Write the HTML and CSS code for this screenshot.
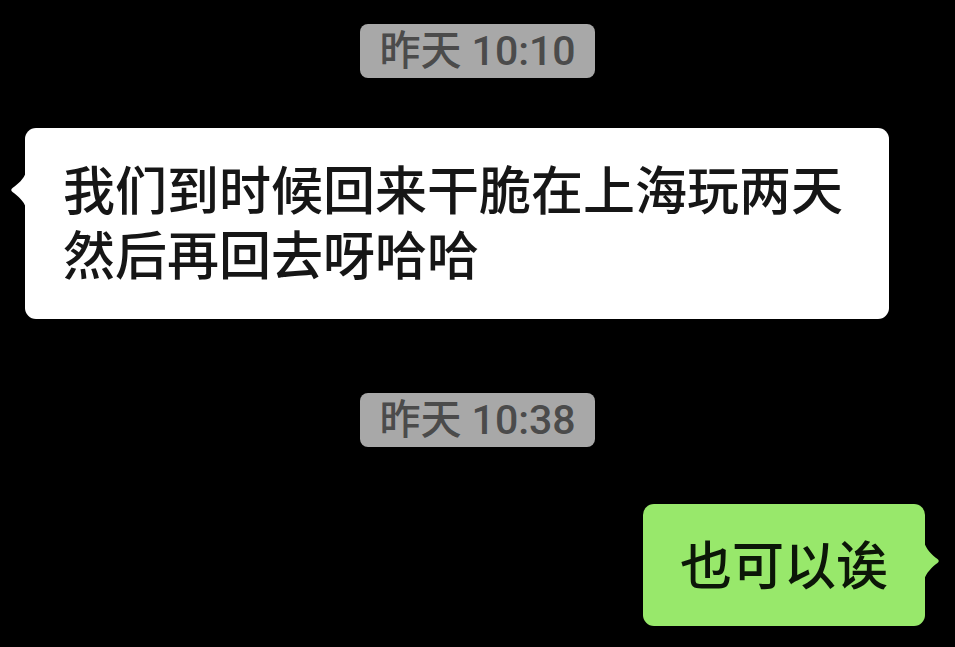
FILE: index.html
```html
<!DOCTYPE html>
<html lang="zh-CN">
<head>
  <meta charset="UTF-8">
  <meta name="viewport" content="width=device-width, initial-scale=1.0">
  <link rel="stylesheet" href="styles.css">
</head>
<body>
  <div id="chat">
    <div class="time-row"><span class="time">昨天 10:10</span></div>

    <div class="msg-row incoming">
      <div class="bubble white">
        <svg class="tail tail-left" width="16" height="36" viewBox="0 0 16 36">
          <path d="M16 0 C14 7 8 12 2.5 16 Q0 18 2.5 20 C8 24 14 29 16 36 Z" fill="#fff"/>
        </svg>
        我们到时候回来干脆在上海玩两天<br>然后再回去呀哈哈
      </div>
    </div>

    <div class="time-row second"><span class="time">昨天 10:38</span></div>

    <div class="msg-row outgoing">
      <div class="bubble green">
        <svg class="tail tail-right" width="16" height="38" viewBox="0 0 16 38">
          <path d="M0 0 C2 7 8 13 13.5 17 Q16 19 13.5 21 C8 25 2 31 0 38 Z" fill="#98e86b"/>
        </svg>
        也可以诶
      </div>
    </div>
  </div>
</body>
</html>
```

FILE: styles.css
```css
body {
  margin: 0;
  background: #000;
  font-family: "Noto Sans CJK SC", "Liberation Sans", sans-serif;
  height: 100vh;
  overflow: hidden;
}

#chat {
  display: flex;
  flex-direction: column;
  padding-top: 24px;
}

.time-row {
  display: flex;
  justify-content: center;
}

.time-row.second {
  margin-top: 74px;
}

/* latin digits first so the clock reads like the system font */
.time {
  font-family: Roboto, "Noto Sans CJK SC", sans-serif;
  background: #a8a8a8;
  color: #4b4b4b;
  font-size: 41px;
  font-weight: 500;
  line-height: 54px;
  height: 54px;
  padding: 0 19px;
  border-radius: 8px;
}

.msg-row {
  display: flex;
}

.incoming {
  margin-top: 50px;
  padding-left: 25px;
}

.outgoing {
  margin-top: 57px;
  justify-content: flex-end;
  padding-right: 30px;
}

.bubble {
  position: relative;
  font-size: 52px;
  font-weight: 500;
  line-height: 65px;
  border-radius: 11px;
  color: #161616;
}

.white {
  background: #fff;
  width: 864px;
  box-sizing: border-box;
  padding: 27px 38px 34px 38px;
}

.green {
  background: #98e86b;
  color: #0c1608;
  padding: 26px 37px 31px 37px;
}

.tail {
  position: absolute;
  display: block;
}

.tail-left {
  left: -15px;
  top: 44px;
}

.tail-right {
  right: -15px;
  top: 38px;
}
```
